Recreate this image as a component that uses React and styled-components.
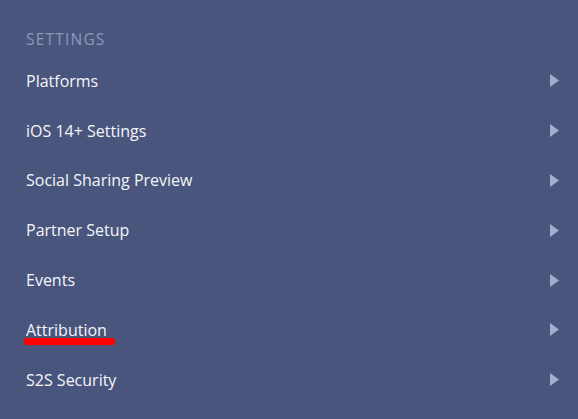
import React from 'react';
import styled, {createGlobalStyle} from 'styled-components';

const GlobalStyle = createGlobalStyle`
  html, body {
    margin: 0;
    padding: 0;
    background: #4a557d;
  }
  body {
    font-family: "Open Sans", "DejaVu Sans", sans-serif;
  }
`;

const Panel = styled.nav`
  width: 578px;
  height: 419px;
  background: #4a557d;
  box-sizing: border-box;
  padding: 29px 0 0 26px;
  overflow: hidden;
`;

const Heading = styled.div`
  font-size: 15.5px;
  color: #8d99b9;
  letter-spacing: 1.2px;
  line-height: 20px;
  margin-bottom: 7px;
`;

const List = styled.ul`
  list-style: none;
  margin: 0;
  padding: 0;
`;

const Row = styled.li`
  display: flex;
  align-items: center;
  justify-content: space-between;
  height: 49.8px;
  padding-right: 19px;
  color: #f4f5f9;
  font-size: 16px;
  cursor: pointer;
`;

const Label = styled.span`
  position: relative;
  line-height: 22px;
`;

const Mark = styled.span`
  position: absolute;
  left: -2px;
  right: -8px;
  bottom: -4px;
  height: 7px;
  border-radius: 3.5px;
  background: #ff0000;
  box-shadow: 0 0 1px #ff0000;
`;

const Arrow = styled.svg`
  width: 9px;
  height: 13px;
  fill: #a3aece;
  flex-shrink: 0;
`;

const items = [
  {label: 'Platforms'},
  {label: 'iOS 14+ Settings'},
  {label: 'Social Sharing Preview'},
  {label: 'Partner Setup'},
  {label: 'Events'},
  {label: 'Attribution', marked: true},
  {label: 'S2S Security'},
];

const App = () => (
  <>
    <GlobalStyle/>
    <Panel>
      <Heading>SETTINGS</Heading>
      <List>
        {items.map((item) => (
          <Row key={item.label}>
            <Label>
              {item.label}
              {item.marked && <Mark/>}
            </Label>
            <Arrow viewBox="0 0 9 13">
              <path d="M0 0 L9 6.5 L0 13 Z"/>
            </Arrow>
          </Row>
        ))}
      </List>
    </Panel>
  </>
);

export default App;
